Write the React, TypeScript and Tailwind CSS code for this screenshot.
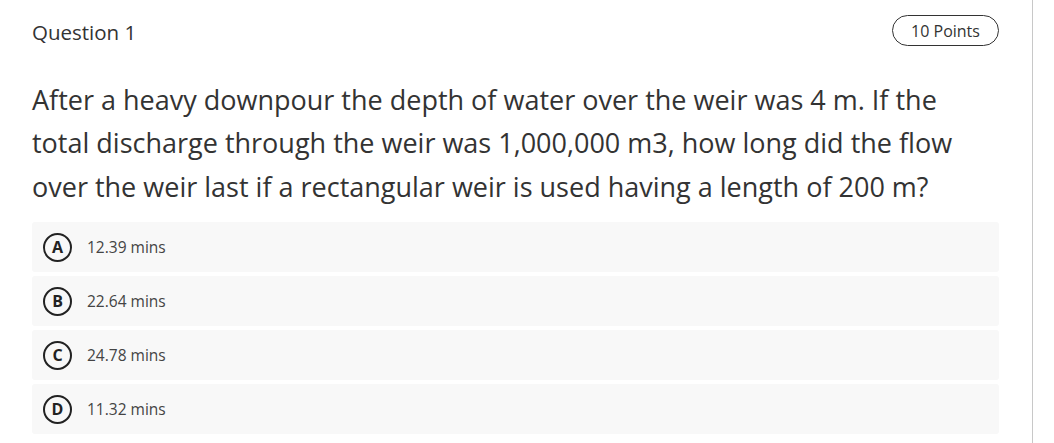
const options = [
  { key: "A", label: "12.39 mins" },
  { key: "B", label: "22.64 mins" },
  { key: "C", label: "24.78 mins" },
  { key: "D", label: "11.32 mins" },
];

export default function App() {
  return (
    <div className="w-[1054px] h-[443px] bg-white overflow-hidden font-['Open_Sans',sans-serif]">
      <div className="w-[1033px] h-full border-r border-[#c8c8c8] pl-8 pr-[33px]">
        <div className="flex items-center justify-between pt-[14px]">
          <h2 className="text-[20.5px] font-medium text-[#333] pt-[3px]">Question 1</h2>
          <span className="h-[31px] w-[107px] flex items-center justify-center rounded-full border border-[#333] text-[16px] text-[#333]">
            10 Points
          </span>
        </div>
        <p className="mt-[30px] text-[27px] leading-[43.5px] text-[#333]">
          After a heavy downpour the depth of water over the weir was 4 m. If the total discharge through the weir was 1,000,000 m3, how long did the flow over the weir last if a rectangular weir is used having a length of 200 m?
        </p>
        <div className="mt-[14px] flex flex-col gap-1">
          {options.map((o) => (
            <div key={o.key} className="h-[50px] rounded-[3px] bg-[#f8f8f8] flex items-center pl-[11px]">
              <span className="w-[29px] h-[29px] shrink-0 rounded-full border-2 border-[#222] flex items-center justify-center text-[16px] font-bold text-[#222]">
                {o.key}
              </span>
              <span className="ml-[15px] text-[15.5px] text-[#444]">{o.label}</span>
            </div>
          ))}
        </div>
      </div>
    </div>
  );
}
